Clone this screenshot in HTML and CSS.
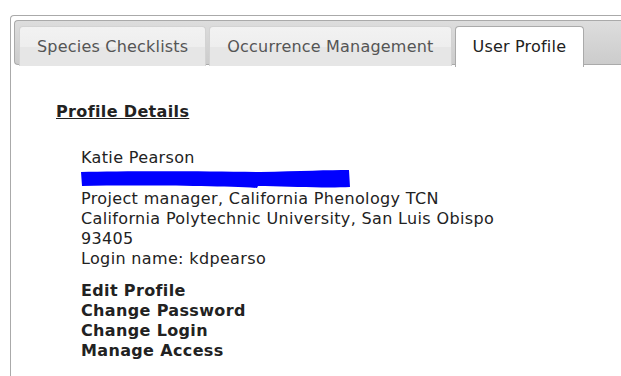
FILE: index.html
```html
<!DOCTYPE html>
<html>
    <head>
        <meta charset="UTF-8">
        <meta name="viewport" content="width=device-width, initial-scale=1.0">
        <title>User Profile</title>
        <link rel="stylesheet" href="styles.css">
    </head>

    <body>
        <div class="tabs">
            <ul class="tab-nav">
                <li class="tab"><a href="#">Species Checklists</a></li>
                <li class="tab"><a href="#">Occurrence Management</a></li>
                <li class="tab tab-active"><a href="#">User Profile</a></li>
            </ul>

            <div class="tab-panel">
                <div class="section-title">Profile Details</div>

                <div class="profile-info">
                    <div>Katie Pearson</div>
                    <div class="redacted">
                        <svg width="272" height="20" viewBox="0 0 272 20">
                            <path d="M1 3 C40 2 120 2 180 3 C220 2 250 1 269 1 L270 18 C250 19 215 18 185 17 L178 17 L177 19 C140 17 60 16 2 17 Z" fill="#0000ff"/>
                        </svg>
                    </div>
                    <div>Project manager, California Phenology TCN</div>
                    <div>California Polytechnic University, San Luis Obispo</div>
                    <div>93405</div>
                    <div>Login name: kdpearso</div>
                </div>

                <div class="profile-links">
                    <a href="#">Edit Profile</a>
                    <a href="#">Change Password</a>
                    <a href="#">Change Login</a>
                    <a href="#">Manage Access</a>
                </div>
            </div>
        </div>
    </body>
</html>
```

FILE: styles.css
```css
body {
    margin: 0;
    padding: 15px 0 0 10px;
    font-family: Verdana, "DejaVu Sans", sans-serif;
    font-size: 16px;
    letter-spacing: 0.35px;
    line-height: 20px;
    color: #222222;
    background-color: white;
    overflow: hidden;
}

.tabs {
    box-sizing: border-box;
    height: calc(100vh - 15px);
    border: 1px solid #aaaaaa;
    border-right: none;
    border-bottom: none;
    border-radius: 4px 0 0 0;
    padding: 4px 0 0 3px;
}

.tab-nav {
    display: flex;
    column-gap: 3px;
    margin: 0;
    padding: 5px 0 0 4px;
    list-style: none;
    border: 1px solid #aaaaaa;
    border-right: none;
    border-radius: 4px 0 0 4px;
    background: linear-gradient(#dddddd, #cccccc);
    height: 38px;
}

.tab {
    border: 1px solid #d3d3d3;
    border-bottom: none;
    border-radius: 4px 4px 0 0;
    background: linear-gradient(#f2f2f2 0%, #eeeeee 50%, #e6e6e6 51%, #e6e6e6 100%);
    height: 39px;
    letter-spacing: 0.2px;
}

.tab a {
    display: block;
    padding: 10px 17px 0 17px;
    color: #555555;
    text-decoration: none;
}

.tab-active {
    background: white;
    border-color: #aaaaaa;
    height: 40px;
}

.tab-active a {
    color: #212121;
}

.tab-panel {
    padding: 37px 0 0 42px;
}

.section-title {
    font-weight: bold;
    text-decoration: underline;
}

.profile-info {
    margin-top: 26px;
    padding-left: 25px;
}

.redacted {
    height: 20px;
}

.redacted svg {
    display: block;
    margin-left: -1px;
    margin-top: 1px;
}

.profile-links {
    display: flex;
    flex-direction: column;
    align-items: flex-start;
    margin-top: 12px;
    padding-left: 25px;
}

.profile-links a {
    font-weight: bold;
    color: #222222;
    text-decoration: none;
}
```
